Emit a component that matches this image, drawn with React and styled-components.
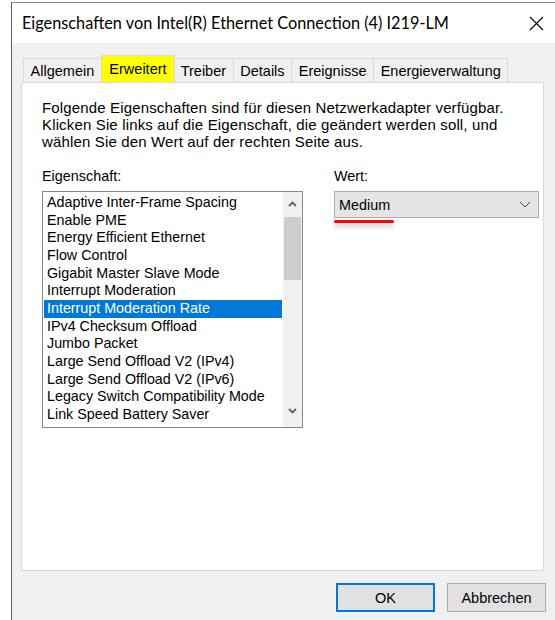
import React, { useState } from "react";
import styled, { createGlobalStyle } from "styled-components";

const GlobalStyle = createGlobalStyle`
    html, body {
        margin: 0;
        padding: 0;
        background: #fff;
        overflow: hidden;
    }
`;

const Window = styled.div`
    margin: 2px 0 0 11px;
    width: 546px;
    height: 640px;
    background: #f0f0f0;
    border-left: 1px solid #5e5e5e;
    border-top: 1px solid #8a8a8a;
    font-family: "Liberation Sans", Arial, sans-serif;
    font-size: 14px;
    color: #000;
    display: flex;
    flex-direction: column;
`;

const TitleBar = styled.div`
    height: 40px;
    background: #fff;
    display: flex;
    align-items: center;
    justify-content: space-between;
    padding: 0 14px 0 10px;
`;

const Title = styled.span`
    font-family: Lato, "Liberation Sans", sans-serif;
    font-size: 16.3px;
    margin-top: -1px;
`;

const CloseButton = styled.button`
    border: 0;
    background: none;
    padding: 0;
    width: 16px;
    height: 16px;
    display: flex;
    align-items: center;
    justify-content: center;
`;

const TabStrip = styled.div`
    display: flex;
    align-items: flex-end;
    height: 28px;
    margin: 11px 0 0 11px;
    font-size: 14.5px;
`;

const Tab = styled.div`
    height: ${(p) => (p.$active ? "26px" : "23px")};
    padding: 0 ${(p) => (p.$active ? "7.5px" : "6.6px")};
    margin: 0 ${(p) => (p.$active ? "-1px" : "0")};
    display: flex;
    align-items: center;
    background: ${(p) => (p.$active ? "#ffff00" : "#f0f0f0")};
    border: 1px solid #d9d9d9;
    border-bottom: 0;
    border-left-width: ${(p) => (p.$first || p.$active ? "1px" : "0")};
    position: relative;
    z-index: ${(p) => (p.$active ? 1 : 0)};
`;

const Panel = styled.div`
    margin-left: 9px;
    width: 523px;
    height: 489px;
    background: #fff;
    border: 1px solid #d9d9d9;
    padding: 16px 0 0 20px;
    box-sizing: border-box;
`;

const Description = styled.p`
    margin: 0;
    font-size: 15px;
    letter-spacing: 0.15px;
    line-height: 17px;
`;

const Columns = styled.div`
    display: flex;
    gap: 31px;
    margin-top: 18px;
`;

const Column = styled.div`
    display: flex;
    flex-direction: column;
    width: ${(p) => p.$width}px;
`;

const Label = styled.div`
    line-height: 17px;
    margin-bottom: 6px;
    font-size: 14.4px;
`;

const ListBox = styled.div`
    height: 237px;
    border: 1px solid #828790;
    box-sizing: border-box;
    display: flex;
    background: #fff;
`;

const Items = styled.ul`
    flex: 1;
    list-style: none;
    margin: 0;
    padding: 2px 1px 0 1px;
    overflow: hidden;
`;

const Item = styled.li`
    height: 17.67px;
    line-height: 17.67px;
    padding-left: 3px;
    white-space: nowrap;
    font-size: 14.3px;
    background: ${(p) => (p.$selected ? "#0078d7" : "transparent")};
    color: ${(p) => (p.$selected ? "#fff" : "#000")};
`;

const ScrollBar = styled.div`
    width: 19px;
    background: #f0f0f0;
    display: flex;
    flex-direction: column;
    align-items: center;
`;

const ScrollArrow = styled.div`
    height: 24px;
    width: 100%;
    display: flex;
    align-items: center;
    justify-content: center;
    margin-top: ${(p) => (p.$down ? "auto" : "0")};
    margin-bottom: ${(p) => (p.$down ? "4px" : "0")};
`;

const Thumb = styled.div`
    width: 17px;
    height: 63px;
    margin-top: 1px;
    background: #cdcdcd;
`;

const Select = styled.div`
    height: 27px;
    border: 1px solid #adadad;
    box-sizing: border-box;
    background: #e5e5e5;
    display: flex;
    align-items: center;
    justify-content: space-between;
    padding: 0 7px 0 4px;
    font-size: 14.4px;
`;

const Marker = styled.div`
    width: 60px;
    height: 3px;
    margin-top: 2px;
    border-radius: 2px;
    background: #ff0000;
    box-shadow: 0 3px 5px rgba(0, 0, 0, 0.25);
`;

const Footer = styled.div`
    display: flex;
    justify-content: flex-end;
    gap: 12px;
    padding: 12px 12px 0 0;
`;

const Button = styled.button`
    width: 99px;
    height: 29px;
    box-sizing: border-box;
    background: #e1e1e1;
    border: ${(p) => (p.$default ? "2px solid #0078d7" : "1px solid #adadad")};
    font-family: "Liberation Sans", Arial, sans-serif;
    font-size: 14.5px;
    color: #000;
    padding: 0;
`;

const tabs = ["Allgemein", "Erweitert", "Treiber", "Details", "Ereignisse", "Energieverwaltung"];

const properties = [
    "Adaptive Inter-Frame Spacing",
    "Enable PME",
    "Energy Efficient Ethernet",
    "Flow Control",
    "Gigabit Master Slave Mode",
    "Interrupt Moderation",
    "Interrupt Moderation Rate",
    "IPv4 Checksum Offload",
    "Jumbo Packet",
    "Large Send Offload V2 (IPv4)",
    "Large Send Offload V2 (IPv6)",
    "Legacy Switch Compatibility Mode",
    "Link Speed Battery Saver",
];

const Chevron = ({ up, color = "#606060" }) => (
    <svg width="9" height="6" viewBox="0 0 9 6">
        <path
            d={up ? "M1 5 L4.5 1.5 L8 5" : "M1 1 L4.5 4.5 L8 1"}
            fill="none"
            stroke={color}
            strokeWidth="1.8"
        />
    </svg>
);

const App = () => {
    const [activeTab] = useState("Erweitert");
    const [selected, setSelected] = useState("Interrupt Moderation Rate");

    return (
        <>
            <GlobalStyle />
            <Window>
                <TitleBar>
                    <Title>Eigenschaften von Intel(R) Ethernet Connection (4) I219-LM</Title>
                    <CloseButton>
                        <svg width="15" height="15" viewBox="0 0 15 15">
                            <path d="M1 1 L14 14 M14 1 L1 14" stroke="#000" strokeWidth="1.1" />
                        </svg>
                    </CloseButton>
                </TitleBar>
                <TabStrip>
                    {tabs.map((t, i) => (
                        <Tab key={t} $active={t === activeTab} $first={i === 0}>
                            {t}
                        </Tab>
                    ))}
                </TabStrip>
                <Panel>
                    <Description>
                        Folgende Eigenschaften sind für diesen Netzwerkadapter verfügbar.
                        <br />
                        Klicken Sie links auf die Eigenschaft, die geändert werden soll, und
                        <br />
                        wählen Sie den Wert auf der rechten Seite aus.
                    </Description>
                    <Columns>
                        <Column $width={261}>
                            <Label>Eigenschaft:</Label>
                            <ListBox>
                                <Items>
                                    {properties.map((p) => (
                                        <Item
                                            key={p}
                                            $selected={p === selected}
                                            onClick={() => setSelected(p)}
                                        >
                                            {p}
                                        </Item>
                                    ))}
                                </Items>
                                <ScrollBar>
                                    <ScrollArrow>
                                        <Chevron up />
                                    </ScrollArrow>
                                    <Thumb />
                                    <ScrollArrow $down>
                                        <Chevron />
                                    </ScrollArrow>
                                </ScrollBar>
                            </ListBox>
                        </Column>
                        <Column $width={205}>
                            <Label>Wert:</Label>
                            <Select>
                                <span>Medium</span>
                                <svg width="12" height="7" viewBox="0 0 12 7">
                                    <path d="M1 1 L6 6 L11 1" fill="none" stroke="#444" strokeWidth="1" />
                                </svg>
                            </Select>
                            <Marker />
                        </Column>
                    </Columns>
                </Panel>
                <Footer>
                    <Button $default>OK</Button>
                    <Button>Abbrechen</Button>
                </Footer>
            </Window>
        </>
    );
};

export default App;
